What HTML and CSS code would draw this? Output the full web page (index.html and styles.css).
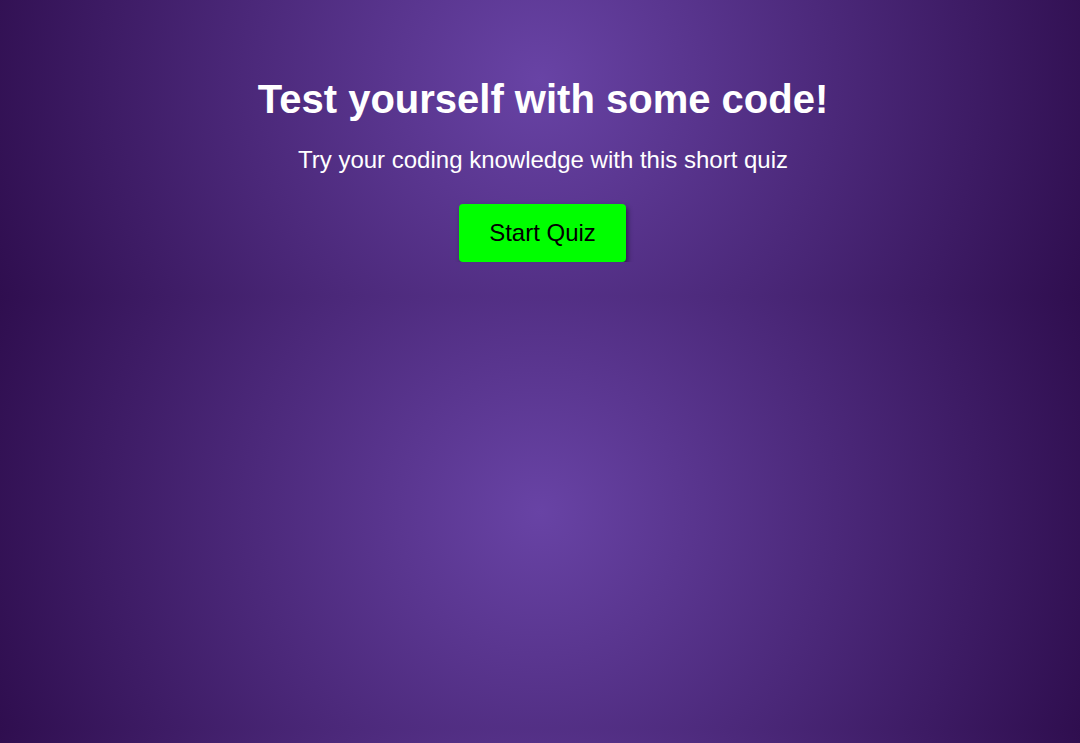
FILE: index.html
```html
<!DOCTYPE html>
<html lang="en">
<head>
<meta charset="utf-8">
<title>Code Quiz</title>
<link rel="stylesheet" href="styles.css">
</head>
<body>
  <main class="intro">
    <h1 class="intro-title">Test yourself with some code!</h1>
    <p class="intro-text">Try your coding knowledge with this short quiz</p>
    <button class="start-btn" type="button">Start Quiz</button>
  </main>
</body>
</html>
```
FILE: styles.css
```css
html {
  min-height: 100%;
  background-color: #3a1558;
  background-image: radial-gradient(circle at center, #6843a5 0%, #2f0e4f 100%);
  background-size: 100% 432px;
  background-position: 0 296px;
  background-repeat: repeat;
}

body {
  margin: 0;
  font-family: "Liberation Sans", Arial, sans-serif;
  color: #ffffff;
}

.intro {
  display: flex;
  flex-direction: column;
  align-items: center;
  text-align: center;
  padding: 76px 0 0 6px;
}

.intro-title {
  margin: 0 0 24px;
  font-size: 40px;
  font-weight: bold;
  line-height: 46px;
}

.intro-text {
  margin: 0 0 30px;
  font-size: 24px;
  line-height: 28px;
}

.start-btn {
  font-family: "Liberation Sans", Arial, sans-serif;
  font-size: 24px;
  line-height: 28px;
  color: #000000;
  background: #00ff00;
  border: none;
  border-radius: 4px;
  padding: 15px 30px;
  margin-left: -1px;
  box-shadow: 2px 3px 5px rgba(0, 0, 0, 0.45);
  cursor: pointer;
}
```
